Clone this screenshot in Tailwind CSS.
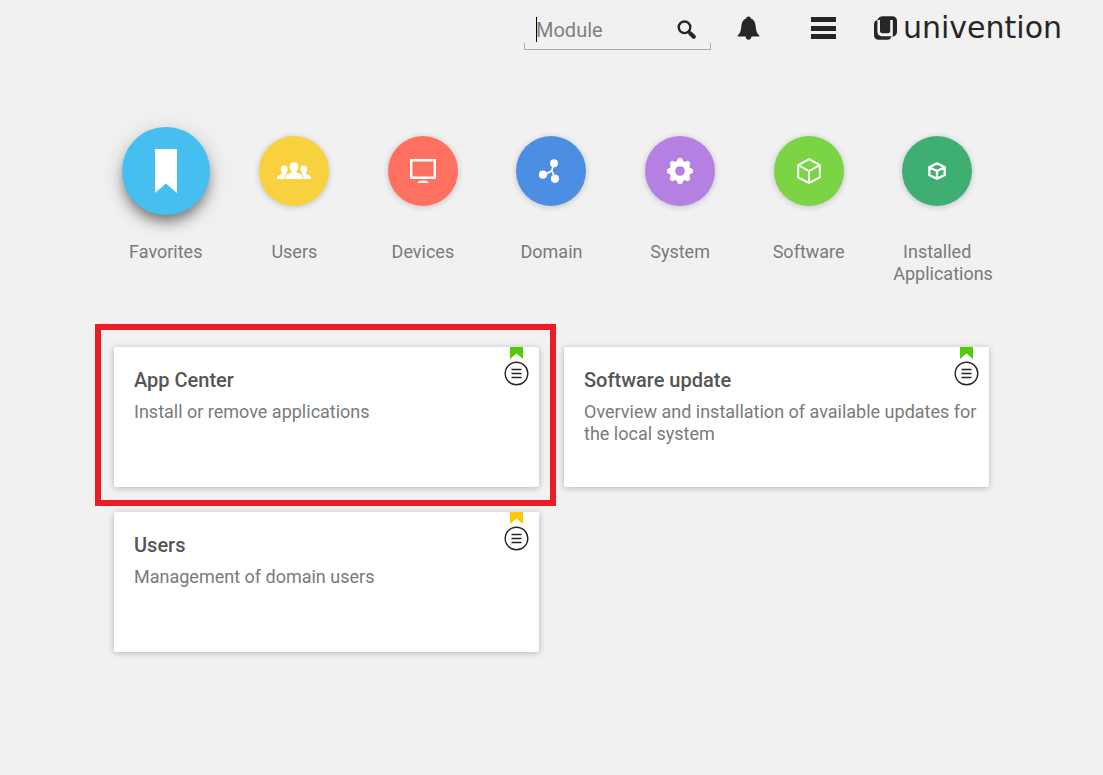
<!DOCTYPE html>
<html lang="en">
<head>
<meta charset="utf-8">
<meta name="viewport" content="width=device-width, initial-scale=1">
<title>Univention Management Console</title>
<script src="https://cdn.jsdelivr.net/npm/@tailwindcss/browser@4"></script>
</head>
<body class="min-h-screen bg-[#f1f1f1] font-['Roboto',sans-serif] text-[18px] leading-[22px] text-[#7a7a7a]">

<header class="flex h-[56px] items-start justify-end pr-[41px] text-[#262626]">
  <form class="relative mt-[10px] flex h-[40px] w-[187px] items-center pr-[14px] pl-[12px]" role="search">
    <input id="search" type="text" aria-label="Search modules" placeholder="Module" class="h-[32px] min-w-0 flex-1 bg-transparent text-[20px] leading-[24px] text-[#262626] caret-transparent outline-none placeholder:text-[#808080]">
    <span class="absolute top-[7px] left-[12px] h-[25px] w-px bg-black"></span>
    <button type="button" aria-label="Search" class="h-[20px] w-[20px]">
      <svg viewBox="0 0 20 20" width="20" height="20" fill="none" stroke="currentColor"><circle cx="7.500" cy="7.300" r="5.800" stroke-width="2.400"/><path d="M11.600 11.600l1.800 1.800" stroke-width="2.400"/><path d="M13.400 13.400l3.400 3.400" stroke-width="4.200" stroke-linecap="round"/></svg>
    </button>
    <span class="pointer-events-none absolute inset-x-0 bottom-0 h-[7px] border border-t-0 border-[#acacac]"></span>
  </form>
  <button type="button" aria-label="Notifications" class="mt-[16px] ml-[26px] h-[24px] w-[23px]">
    <svg viewBox="0 0 23 24" width="23" height="24" fill="currentColor"><path d="M11.5 0.5c1.4 0 2.3 0.9 2.3 2.1 3.2 1 4.4 3.7 4.8 7.1 0.5 4.2 0.9 7.2 3.1 9 0.8 0.6 0.9 1.9 0 1.9H14.4c0 2-1.2 3.2-2.9 3.2s-2.9-1.2-2.9-3.2H1.3c-0.9 0-0.8-1.3 0-1.9 2.2-1.8 2.6-4.8 3.1-9 0.4-3.400 1.600-6.100 4.800-7.100C9.200 1.400 10.100 0.500 11.500 0.500z"/></svg>
  </button>
  <button type="button" aria-label="Menu" class="mt-[17px] ml-[51px] flex h-[22px] w-[25px] flex-col justify-between">
    <span class="h-[5px] w-full bg-[#262626]"></span>
    <span class="h-[5px] w-full bg-[#262626]"></span>
    <span class="h-[5px] w-full bg-[#262626]"></span>
  </button>
  <a href="#" class="mt-[12px] ml-[38px] flex h-[32px] w-[188px] items-center gap-[5px] whitespace-nowrap font-['DejaVu_Sans',sans-serif] text-[30px] leading-[32px]">
    <svg viewBox="0 0 24 24" width="24" height="24" class="shrink-0"><path d="M9 .2h9.500A4.500 4.500 0 0 1 23 4.700v11.300a4.500 4.500 0 0 1-4.500 4.500H17c0 2-1.200 3.300-3.200 3.300H4.500A4.500 4.500 0 0 1 0 19.300V8.500C0 6 1.300 4.300 3.400 4 4.200 1.600 6 .2 9 .2z" fill="#262626"/><path d="M3.400 4H6v10.800c0 1.700.9 2.500 2.500 2.500h5.200c1.700 0 2.500-.8 2.500-2.500V4h2.600v16.300H8.300c-3.200 0-4.900-1.600-4.900-4.700z" fill="#f1f1f1"/></svg>
    <span>univention</span>
  </a>
</header>

<main>
  <nav aria-label="Categories" class="mx-auto mt-[71px] grid max-w-[900px] grid-cols-7 text-center">
    <a href="#" class="flex flex-col items-center">
      <span class="flex h-[88px] items-center"><span class="flex h-[88px] w-[88px] items-center justify-center rounded-full bg-[#47bef0] shadow-[0_8px_14px_-2px_rgba(0,0,0,0.5),0_4px_30px_rgba(0,0,0,0.1)]">
        <svg viewBox="0 0 24 44" width="24" height="44"><path d="M1 0h22v44L12 34.500 1 44z" fill="#fff"/></svg></span></span>
      <span class="mt-[26px] w-[88px]">Favorites</span>
    </a>
    <a href="#" class="flex flex-col items-center">
      <span class="flex h-[88px] items-center"><span class="flex h-[70px] w-[70px] items-center justify-center rounded-full bg-[#f8d23e] shadow-[0_1px_6px_rgba(0,0,0,0.2)]">
        <svg viewBox="0 0 34 18" width="34" height="18" fill="#fff"><path id="side" d="M7.200 3.600c2.100 0 3.400 1.500 3.400 3.600 0 1.500-.5 2.700-1.400 3.600-.3.500-.1 1.200.4 1.500-1.500.8-2 1.900-2.100 4.700H0c0-2.800.9-3.600 3.600-4.400 1.500-.5 1.800-1 1.500-1.800-.9-.9-1.300-2.100-1.300-3.600 0-2.100 1.300-3.600 3.400-3.600z"/><use href="#side" transform="matrix(-1 0 0 1 34 0)"/><path d="M17 .2c2.700 0 4.300 1.800 4.300 4.500 0 1.900-.6 3.300-1.700 4.500-.5 1 .1 1.700 2.200 2.400 2.900 1 3.900 2.300 3.900 5.400H8.300c0-3.100 1-4.400 3.900-5.400 2.100-.7 2.700-1.400 2.200-2.400-1.100-1.200-1.700-2.600-1.700-4.500C12.700 2 14.300.2 17 .2z"/></svg></span></span>
      <span class="mt-[26px] w-[88px]">Users</span>
    </a>
    <a href="#" class="flex flex-col items-center">
      <span class="flex h-[88px] items-center"><span class="flex h-[70px] w-[70px] items-center justify-center rounded-full bg-[#ff7061] shadow-[0_1px_6px_rgba(0,0,0,0.2)]">
        <svg viewBox="0 0 26 24" width="26" height="24"><path d="M1.200 1.200h23.600v17.600H1.200z" fill="none" stroke="#fff" stroke-width="2.400"/><path d="M9.500 21.800h7l2.500 2.200H7z" fill="#fff"/></svg></span></span>
      <span class="mt-[26px] w-[88px]">Devices</span>
    </a>
    <a href="#" class="flex flex-col items-center">
      <span class="flex h-[88px] items-center"><span class="flex h-[70px] w-[70px] items-center justify-center rounded-full bg-[#4c8fe2] shadow-[0_1px_6px_rgba(0,0,0,0.2)]">
        <svg viewBox="0 0 24 24" width="24" height="24" fill="#fff"><path d="M15 4.500L12.800 11.800M6 15.500L12.800 11.800M16.500 19.500L12.800 11.800" stroke="#fff" stroke-width="1.700"/><circle cx="15" cy="4.300" r="4"/><circle cx="4" cy="15.600" r="4.100"/><circle cx="16" cy="19.800" r="4.100"/></svg></span></span>
      <span class="mt-[26px] w-[88px]">Domain</span>
    </a>
    <a href="#" class="flex flex-col items-center">
      <span class="flex h-[88px] items-center"><span class="flex h-[70px] w-[70px] items-center justify-center rounded-full bg-[#b680e2] shadow-[0_1px_6px_rgba(0,0,0,0.2)]">
        <svg viewBox="-13 -13 26 26" width="26" height="26"><g fill="#fff"><circle r="10.300"/><g id="teeth"><path id="tooth" d="M-3.400-9.500L-1.700-12.900H1.700L3.400-9.500V9.500L1.700 12.900H-1.700L-3.400 9.500z"/><use href="#tooth" transform="rotate(90)"/></g><use href="#teeth" transform="rotate(45)"/></g><circle r="4.800" fill="#b680e2"/></svg></span></span>
      <span class="mt-[26px] w-[88px]">System</span>
    </a>
    <a href="#" class="flex flex-col items-center">
      <span class="flex h-[88px] items-center"><span class="flex h-[70px] w-[70px] items-center justify-center rounded-full bg-[#7bd444] shadow-[0_1px_6px_rgba(0,0,0,0.2)]">
        <svg viewBox="0 0 24 26" width="24" height="26" fill="none" stroke="#fff" stroke-width="2"><path d="M12 1.200L22.800 7v12.500L12 25 1.200 19.500V7zM1.200 7L12 13l10.800-6M12 13v12"/></svg></span></span>
      <span class="mt-[26px] w-[88px]">Software</span>
    </a>
    <a href="#" class="flex flex-col items-center">
      <span class="flex h-[88px] items-center"><span class="flex h-[70px] w-[70px] items-center justify-center rounded-full bg-[#3fae73] shadow-[0_1px_6px_rgba(0,0,0,0.2)]">
        <svg viewBox="0 0 18 18" width="18" height="18" fill="none" stroke="#fff" stroke-width="2.300"><path d="M9 1.300l7.700 3.900v7.800L9 16.700 1.300 13V5.200zM1.300 5.200L9 9l7.700-3.800M9 9v7.700"/></svg></span></span>
      <span class="mt-[26px] w-[88px] text-left"><span class="block w-full text-center">Installed</span> Applications</span>
    </a>
  </nav>

  <section aria-label="Modules" class="mx-auto mt-[62px] grid max-w-[875px] grid-cols-2 gap-[25px]">
    <article class="relative min-h-[140px] rounded-[2px] bg-white pt-[21px] pr-[10px] pb-[20px] pl-[20px] shadow-[0_1px_6px_rgba(0,0,0,0.25)]">
      <h2 class="text-[20px] leading-[24px] font-medium text-[#555]">App Center</h2>
      <p class="mt-[9px]">Install or remove applications</p>
      <svg viewBox="0 0 13 12" width="13" height="12" class="absolute top-0 right-[16px]"><path d="M0 0h13v12L6.500 6.500 0 12z" fill="#51cc0a"/></svg>
      <button type="button" aria-label="App Center menu" class="absolute top-[14px] right-[10px] h-[25px] w-[25px]"><svg viewBox="0 0 25 25" width="25" height="25" fill="none" stroke="#262626" stroke-width="1.400"><circle cx="12.500" cy="12.500" r="11.300"/><path d="M7.500 8.500h10M7.500 12.500h10M7.500 16.500h10"/></svg></button>
      <span class="pointer-events-none absolute -top-[23px] -right-[17px] -bottom-[19px] -left-[19px] z-10 border-[6px] border-[#ed1c24]"></span>
    </article>
    <article class="relative min-h-[140px] rounded-[2px] bg-white pt-[21px] pr-[10px] pb-[20px] pl-[20px] shadow-[0_1px_6px_rgba(0,0,0,0.25)]">
      <h2 class="text-[20px] leading-[24px] font-medium text-[#555]">Software update</h2>
      <p class="mt-[9px]">Overview and installation of available updates for the local system</p>
      <svg viewBox="0 0 13 12" width="13" height="12" class="absolute top-0 right-[16px]"><path d="M0 0h13v12L6.500 6.500 0 12z" fill="#51cc0a"/></svg>
      <button type="button" aria-label="Software update menu" class="absolute top-[14px] right-[10px] h-[25px] w-[25px]"><svg viewBox="0 0 25 25" width="25" height="25" fill="none" stroke="#262626" stroke-width="1.400"><circle cx="12.500" cy="12.500" r="11.300"/><path d="M7.500 8.500h10M7.500 12.500h10M7.500 16.500h10"/></svg></button>
    </article>
    <article class="relative min-h-[140px] rounded-[2px] bg-white pt-[21px] pr-[10px] pb-[20px] pl-[20px] shadow-[0_1px_6px_rgba(0,0,0,0.25)]">
      <h2 class="text-[20px] leading-[24px] font-medium text-[#555]">Users</h2>
      <p class="mt-[9px]">Management of domain users</p>
      <svg viewBox="0 0 13 12" width="13" height="12" class="absolute top-0 right-[16px]"><path d="M0 0h13v12L6.500 6.500 0 12z" fill="#fcc900"/></svg>
      <button type="button" aria-label="Users menu" class="absolute top-[14px] right-[10px] h-[25px] w-[25px]"><svg viewBox="0 0 25 25" width="25" height="25" fill="none" stroke="#262626" stroke-width="1.400"><circle cx="12.500" cy="12.500" r="11.300"/><path d="M7.500 8.500h10M7.500 12.500h10M7.500 16.500h10"/></svg></button>
    </article>
  </section>
</main>
</body>
</html>
